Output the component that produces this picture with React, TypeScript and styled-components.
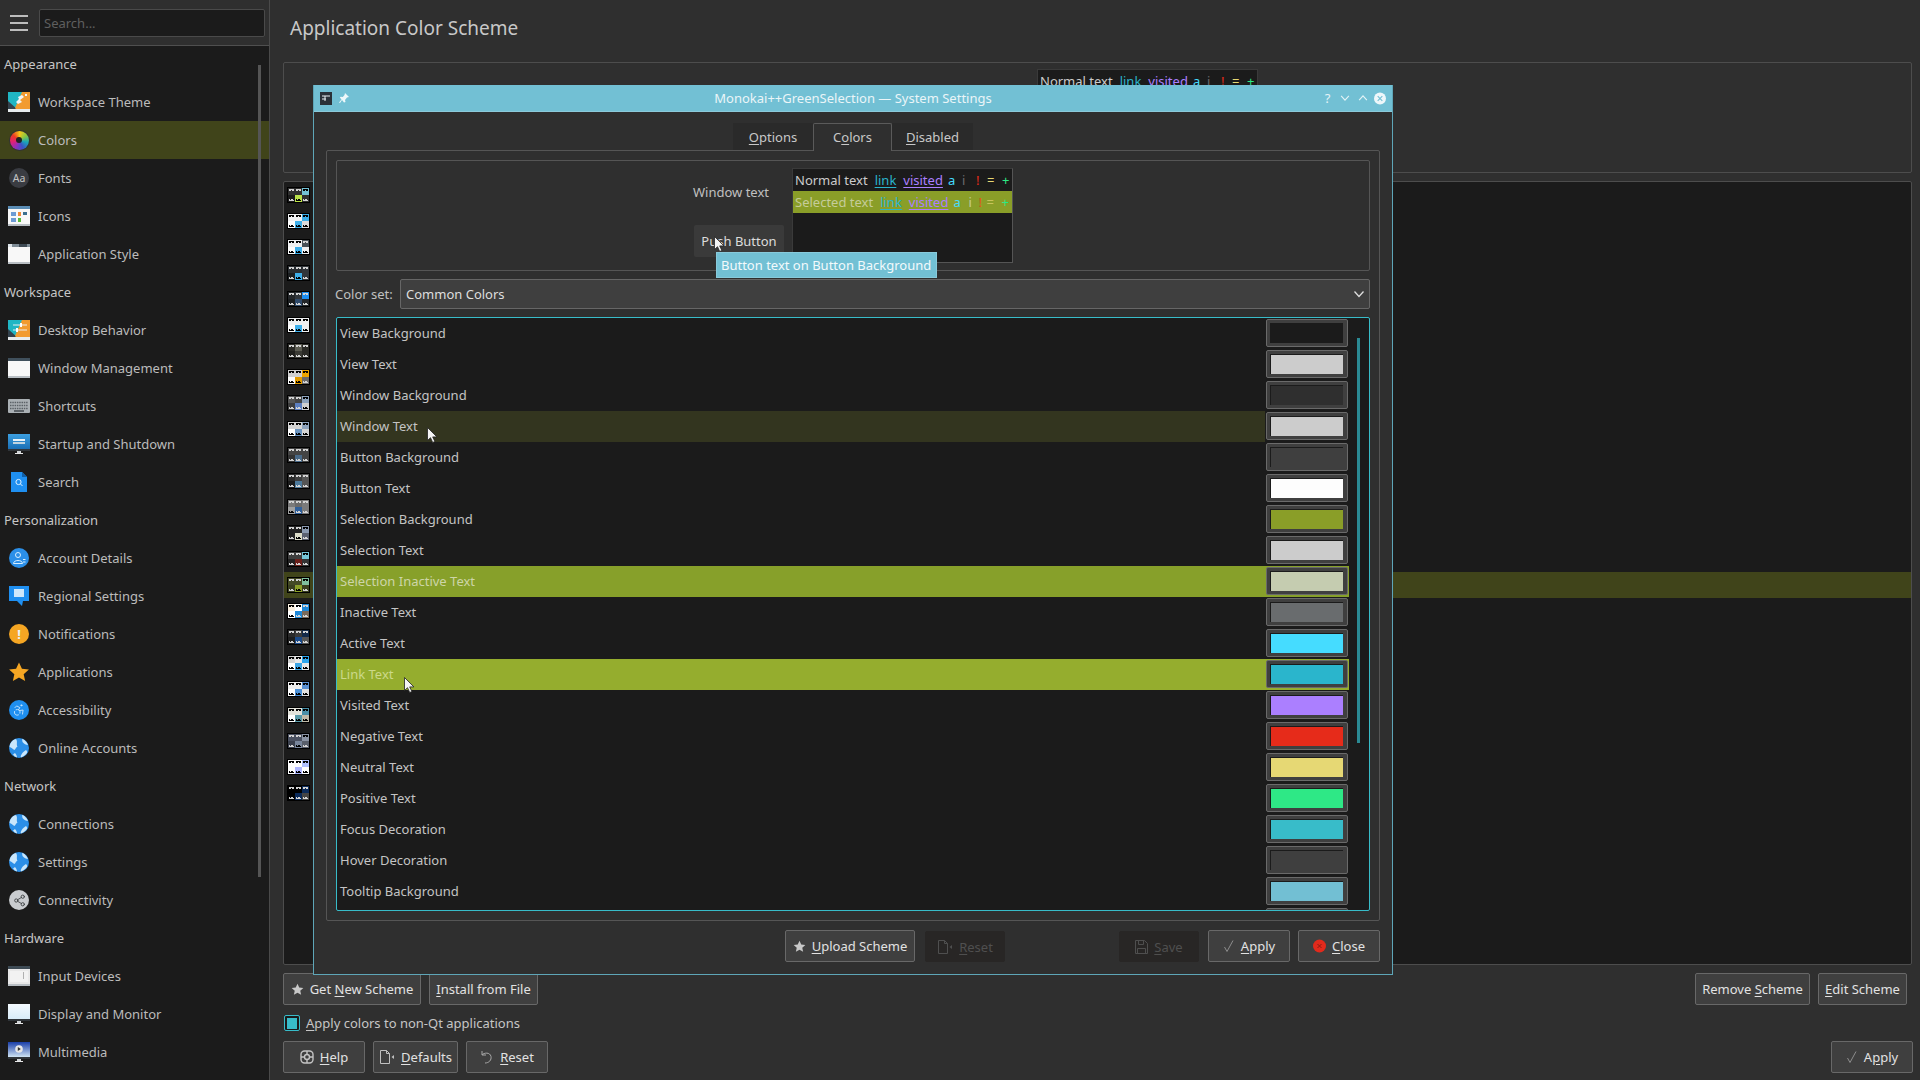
import React from "react";
import styled, { createGlobalStyle } from "styled-components";
import { Accessibility, Share2 } from "lucide-react";

const Global = createGlobalStyle`
  html, body { margin: 0; padding: 0; background: #2f2f2f; overflow: hidden; }
  body { font-family: "Noto Sans", "Open Sans", sans-serif; font-size: 13px; color: #cccccc; }
  * { box-sizing: border-box; }
`;

const Root = styled.div`
  position: relative; width: 1920px; height: 1080px; display: flex; overflow: hidden; background: #2f2f2f;
`;

/* ---------- sidebar ---------- */
const Sidebar = styled.aside`
  width: 270px; height: 1080px; flex: none; display: flex; flex-direction: column;
  border-right: 1px solid #4a4a4a; background: #1b1b1b;
`;
const SideHeader = styled.div`
  height: 46px; flex: none; display: flex; align-items: center; gap: 11px; padding: 0 4px 0 10px;
  background: #2f2f2f; border-bottom: 1px solid #4f4f4f;
`;
const Burger = styled.div`
  width: 18px; height: 16px; flex: none; display: flex; flex-direction: column; justify-content: space-between;
  & > i { display: block; height: 2px; background: #bdbdbd; }
`;
const SearchBox = styled.div`
  width: 226px; height: 28px; display: flex; align-items: center; padding-left: 4px; color: #5f5f5f;
  background: #1b1b1b; border: 1px solid #4a4a4a; border-radius: 2px;
`;
const SideList = styled.div`
  position: relative; flex: 1; overflow: hidden;
`;
const SideScroll = styled.div`
  position: absolute; left: 258px; top: 19px; width: 3px; height: 812px; background: #555;
`;
const SideHeading = styled.div`
  height: 38px; display: flex; align-items: center; padding: 0 0 1px 4px; color: #c6c6c6;
  &:first-child { height: 37px; padding-bottom: 2px; }
`;
const SideRow = styled.div<{ $active?: boolean }>`
  height: 38px; display: flex; align-items: center; gap: 8px; padding-left: 8px; color: #bcbcbc;
  background: ${(p) => (p.$active ? "#40441a" : "transparent")};
`;
const IconSlot = styled.span`
  width: 22px; height: 22px; flex: none; display: flex; align-items: center; justify-content: center;
  & > svg { display: block; }
`;
const ColorWheel = styled.span`
  width: 19px; height: 19px; border-radius: 50%; display: flex; align-items: center; justify-content: center;
  background: conic-gradient(#f5c518, #8cc63f, #19a7b8, #3a54c4, #8e2fc0, #e0207a, #ee3a24, #f5c518);
  box-shadow: 0 0 0 1px #333;
  &::after { content: ""; width: 6px; height: 6px; border-radius: 50%; background: #222; }
`;
const FontBadge = styled.span`
  width: 20px; height: 20px; border-radius: 50%; background: #3a3c42; color: #c4c4c4; font-size: 10.5px;
  display: flex; align-items: center; justify-content: center;
`;
const Round = styled.span<{ $bg: string }>`
  width: 20px; height: 20px; border-radius: 50%; background: ${(p) => p.$bg}; color: #e8f4fc;
  display: flex; align-items: center; justify-content: center; font-weight: 700; font-size: 13px;
`;

/* ---------- main page ---------- */
const Main = styled.main`
  flex: 1; min-width: 0; height: 1080px; display: flex; flex-direction: column; padding: 0 8px 7px 13px;
`;
const Title = styled.h1`
  margin: 0 0 6px; height: 56px; padding-left: 7px; line-height: 56px; font-size: 19px; font-weight: 400; color: #c8c8c8;
`;
const PreviewFrame = styled.div`
  height: 111px; flex: none; display: flex; justify-content: flex-start; padding: 6px 0 0 753px;
  border: 1px solid #4d4d4d; border-radius: 2px;
`;
const BackPreview = styled.div`
  width: 221px; height: 90px; background: #1b1b1b; border: 1px solid #3a3a3a;
`;
const SchemeList = styled.div`
  flex: 1; min-height: 0; margin-top: 8px; background: #1b1b1b; border: 1px solid #4d4d4d;
  border-radius: 2px; overflow: hidden;
`;
const SchemeRow = styled.div<{ $active?: boolean }>`
  height: 26px; display: flex; align-items: center; padding-left: 3px;
  background: ${(p) => (p.$active ? "#40441a" : "transparent")};
`;
const Thumb = styled.div`
  width: 23px; height: 16px; display: grid; grid-template-columns: repeat(3, 7px); grid-template-rows: repeat(2, 7px);
  border: 1px solid #000; background: #000;
`;
const markTop = (c: string) =>
  `linear-gradient(${c},${c}) 1px 1px/5px 1px no-repeat, linear-gradient(${c},${c}) 1px 2px/2px 1px no-repeat, linear-gradient(${c},${c}) 4px 2px/2px 1px no-repeat`;
const markBottom = (c: string) =>
  `linear-gradient(${c},${c}) 1px 5px/5px 1px no-repeat, linear-gradient(${c},${c}) 1px 4px/1px 1px no-repeat, linear-gradient(${c},${c}) 3px 4px/2px 1px no-repeat`;
const ThumbCell = styled.div<{ $bg: string; $mark: string; $bottom: boolean }>`
  background: ${(p) => (p.$bottom ? markBottom(p.$mark) : markTop(p.$mark))}, ${(p) => p.$bg};
`;
const ButtonRow = styled.div`
  flex: none; display: flex; align-items: center; gap: 8px;
`;
const FirstRow = styled(ButtonRow)`
  margin-top: 8px; padding-right: 5px;
`;
const LastRow = styled(ButtonRow)`
  margin-right: -1px;
`;
const Spacer = styled.div`
  flex: 1;
`;
const CheckRow = styled.label`
  height: 36px; flex: none; display: flex; align-items: center; gap: 6px; padding-left: 1px; color: #c6c6c6;
`;
const CheckBox = styled.span`
  width: 16px; height: 16px; display: flex; align-items: center; justify-content: center;
  border: 1px solid #38bcc9; border-radius: 2px; background: #1b1b1b;
  &::after { content: ""; width: 10px; height: 11px; background: #38bcc9; }
`;
const Btn = styled.button<{ $w: number }>`
  width: ${(p) => p.$w}px; height: 32px; flex: none; display: flex; align-items: center; justify-content: center; gap: 6px;
  padding: 0; font: inherit; color: #e2e2e2; background: #3f3f3f; border: 1px solid #686868; border-radius: 2px;
  & > svg { flex: none; display: block; }
`;
const DisabledBtn = styled(Btn)`
  height: 31px; margin: 1px 1px 0 2px; color: #4f4f4f; background: #282625; border-color: #282625;
`;
const Key = styled.u`
  text-underline-offset: 2px;
`;

/* ---------- dialog ---------- */
const Dialog = styled.section`
  position: absolute; left: 313px; top: 85px; width: 1080px; height: 890px; display: flex; flex-direction: column;
  background: #2f2f2f; border: 1px solid #5ea6b8; border-top: 0;
`;
const TitleBar = styled.header`
  height: 27px; flex: none; display: grid; grid-template-columns: 1fr auto 1fr; align-items: center; padding: 0 6px 0 6px;
  background: #72c0d4; color: #eaf5f8; border-bottom: 1px solid #8ccadb;
`;
const TitleLeft = styled.div`
  display: flex; align-items: center; gap: 7px;
`;
const TitleRight = styled.div`
  display: flex; align-items: center; justify-content: flex-end; gap: 5.5px;
  color: #e4f3f7; & > * { width: 12px; text-align: center; flex: none; }
`;
const Tabs = styled.nav`
  display: flex; justify-content: center; margin-top: 11px; height: 27px; flex: none;
`;
const Tab = styled.div<{ $active?: boolean; $w: number }>`
  width: ${(p) => p.$w}px; height: ${(p) => (p.$active ? "28px" : "27px")}; position: relative; z-index: 1;
  display: flex; align-items: center; justify-content: center; color: #c8c8c8;
  background: ${(p) => (p.$active ? "#2f2f2f" : "#2a2a2a")};
  ${(p) => (p.$active ? "border: 1px solid #5a5a5a; border-bottom: 0; border-radius: 2px 2px 0 0; padding-bottom: 1px;" : "")}
`;
const Pane = styled.div`
  flex: 1; min-height: 0; display: flex; flex-direction: column; margin: 0 12px; padding: 9px;
  border: 1px solid #555; border-radius: 2px;
`;
const DemoFrame = styled.div`
  height: 111px; flex: none; display: flex; gap: 8px; padding: 7px 0 0 356px; border: 1px solid #555; border-radius: 2px;
`;
const DemoColumn = styled.div`
  width: 91px; flex: none; padding-top: 14px; display: flex; flex-direction: column; gap: 21px;
`;
const DemoLabel = styled.div`
  height: 22px; line-height: 21px; color: #c0c0c0;
`;
const PushWrap = styled.div`
  position: relative; width: 90px; height: 32px; margin-left: 1px;
`;
const PushButton = styled.div`
  width: 90px; height: 32px; display: flex; align-items: center; justify-content: center; background: #3a3a3a; border-radius: 2px; color: #dcdcdc;
`;
const Tooltip = styled.div`
  position: absolute; left: 22px; top: 27px; width: 221px; height: 26px; display: flex; align-items: center; padding-left: 4px;
  background: #72c0d4; color: #f2fafc; border: 1px solid #88cadb; white-space: nowrap; z-index: 3;
`;
const CursorMark = styled.svg<{ $x: number; $y: number }>`
  position: absolute; left: ${(p) => p.$x}px; top: ${(p) => p.$y}px; z-index: 4; display: block;
`;
const TextDemo = styled.div`
  width: 221px; height: 95px; flex: none; background: #1b1b1b; border: 1px solid #3a3a3a; border-bottom-color: #555; border-right-color: #555;
`;
const DemoLine = styled.div<{ $selected?: boolean }>`
  height: 22px; display: flex; align-items: center; gap: 7px; padding-left: 2px; white-space: nowrap;
  background: ${(p) => (p.$selected ? "#8a9e28" : "transparent")};
  color: ${(p) => (p.$selected ? "#c5cc9a" : "#cccccc")};
`;
const Tone = styled.span<{ $c: string; $u?: boolean }>`
  color: ${(p) => p.$c}; ${(p) => (p.$u ? "text-decoration: underline; text-underline-offset: 2px;" : "")}
`;
const Symbols = styled.span`
  display: flex; flex: none; margin-left: -2px;
`;
const Sym = styled.span<{ $c: string; $w: number }>`
  width: ${(p) => p.$w}px; color: ${(p) => p.$c}; flex: none;
`;
const SetRow = styled.div`
  height: 30px; flex: none; margin: 8px 0 8px -1px; display: flex; align-items: center; color: #c0c0c0;
`;
const SetLabel = styled.span`
  width: 65px; flex: none;
`;
const Combo = styled.div`
  flex: 1; height: 30px; display: flex; align-items: center; justify-content: space-between; padding: 0 3px 0 5px;
  background: #3f3f3f; border: 1px solid #666; border-radius: 2px; color: #dedede;
`;
const ColorList = styled.div`
  position: relative; flex: 1; min-height: 0; overflow: hidden; background: #1b1b1b; border: 1px solid #38bcc9; border-radius: 2px; padding-right: 20px;
`;
const ColorScroll = styled.div`
  position: absolute; left: 1020px; top: 20px; width: 3px; height: 405px; background: #2b8a94;
`;
const ColorRow = styled.div<{ $tone: "plain" | "selected" | "pressed" }>`
  height: 31px; display: flex; align-items: flex-start;
  background: ${(p) => (p.$tone === "selected" ? "#87a02a" : p.$tone === "pressed" ? "#95ad2e" : "transparent")};
`;
const ColorName = styled.div<{ $hover?: boolean; $c: string }>`
  position: relative; flex: 1; height: 31px; display: flex; align-items: center; padding: 0 0 2px 3px; color: ${(p) => p.$c};
  background: ${(p) => (p.$hover ? "#33351f" : "transparent")};
`;
const SwatchBtn = styled.div`
  width: 82px; height: 28px; margin: 1px 1px 0; flex: none; padding: 3px 4px 3px 3px; display: flex;
  background: #3f3f3f; border: 1px solid #6a6a6a; border-radius: 2px;
`;
const SwatchFill = styled.div<{ $c: string }>`
  flex: 1; background: ${(p) => p.$c}; border-top: 1px solid #1b1b1b; border-left: 1px solid #1b1b1b;
`;
const DialogButtons = styled.div`
  height: 32px; flex: none; display: flex; align-items: center; gap: 8px; margin: 9px 0 12px; padding: 0 12px 0 471px;
`;

/* ---------- drawings ---------- */
const Cursor = ({ x, y }: { x: number; y: number }) => (
  <CursorMark $x={x} $y={y} width="11" height="16" viewBox="0 0 11 16">
    <path d="M.5.5v13l3-2.8 2.2 4.8 2.2-1-2.2-4.6h4.2z" fill="#f4f4f4" stroke="#222" strokeWidth=".8" />
  </CursorMark>
);
const Star = ({ c = "#c8c8c8", s = 13 }: { c?: string; s?: number }) => (
  <svg width={s} height={s} viewBox="0 0 24 24"><path fill={c} d="M12 1.5l3.2 7 7.6.8-5.7 5.1 1.6 7.5L12 18l-6.7 3.9 1.6-7.5L1.200 9.300l7.6-.8z" /></svg>
);
const DocBack = ({ c = "#c0c0c0" }: { c?: string }) => (
  <svg width="16" height="14" viewBox="0 0 16 14" fill="none"><path d="M1.500.5h6l3 3v10h-9z" stroke={c} /><path d="M7.500.5v3h3" stroke={c} /><path d="M15 5v4l-2.500-2z" fill={c} /></svg>
);
const Floppy = () => (
  <svg width="13" height="14" viewBox="0 0 13 14" fill="none" stroke="#4f4f4f"><path d="M.5.5h9l3 3v10H.500z" /><path d="M3.500.5v4h5v-4M2.500 13.500v-5h8v5" /></svg>
);
const Tick = () => (
  <svg width="12" height="14" viewBox="0 0 12 14" fill="none"><path d="M1.500 8l2.500 4.500L10 1.500" stroke="#8d8d8d" /></svg>
);
const CloseDot = () => (
  <svg width="13" height="14" viewBox="0 0 13 14"><circle cx="6.500" cy="7" r="6.500" fill="#e22a1c" /><path d="M4.500 5l4 4M8.500 5l-4 4" stroke="#8f1a10" /></svg>
);
const Undo = () => (
  <svg width="14" height="14" viewBox="0 0 14 14" fill="none" stroke="#a8a8a8"><path d="M2 1v4h4" /><path d="M2 5c2-2.500 8-3 9 1.500 .700 3.500-2 6.500-6 6.500" /></svg>
);
const HelpMark = () => (
  <svg width="14" height="14" viewBox="0 0 14 14" fill="none" stroke="#c4c4c4" strokeWidth="1.400">
    <rect x="1" y="1" width="12" height="12" rx="3.500" /><path d="M7 1v12M1 7h12" /><circle cx="7" cy="7" r="2.500" fill="#3f3f3f" />
  </svg>
);
const ChevDown = ({ c = "#dedede", s = 14 }: { c?: string; s?: number }) => (
  <svg width={s} height={s} viewBox="0 0 14 14" fill="none"><path d="M2.500 4.500L7 9.500l4.500-5" stroke={c} strokeWidth="1.300" /></svg>
);
const ChevUp = () => (
  <svg width="12" height="12" viewBox="0 0 14 14" fill="none"><path d="M2.500 9.500L7 4.500l4.500 5" stroke="#e4f3f7" strokeWidth="1.300" /></svg>
);
const AppGlyph = () => (
  <svg width="12" height="13" viewBox="0 0 12 13"><rect width="12" height="13" fill="#2a3138" /><path d="M2 4h8M2 7h4M5 4v5" stroke="#e8f0f2" /></svg>
);
const Pin = () => (
  <svg width="10" height="11" viewBox="0 0 10 11"><path d="M6 0l4 4-2 .5-2 2.500.5 2-1.500 .5L3 7 1 10 0 9.500 2.500 6.500.8 4.500l1-.8 2 .3L5.500 2z" fill="#eef8fa" /></svg>
);
const CloseRound = () => (
  <svg width="13" height="13" viewBox="0 0 13 13"><circle cx="6.500" cy="6.500" r="6.500" fill="#eef7fa" /><path d="M4 4l5 5M9 4l-5 5" stroke="#72c0d4" strokeWidth="1.200" /></svg>
);

const Win = ({ bar, body = "#f8f8f8", children }: { bar: string; body?: string; children?: React.ReactNode }) => (
  <svg width="22" height="20" viewBox="0 0 22 20">
    <rect y="0" width="22" height="20" fill={body} />
    <rect width="22" height="3" fill={bar} />
    <rect y="18" width="22" height="2" fill="#b9bfc4" />
    {children}
  </svg>
);
const Diag = ({ children }: { children?: React.ReactNode }) => (
  <svg width="22" height="20" viewBox="0 0 22 20">
    <rect width="22" height="17" fill="#20b6c4" />
    <path d="M0 9v8h9z" fill="#34424d" />
    <path d="M14 0h8v17H8l-1-1z" fill="#f29b30" />
    <rect y="17" width="22" height="3" fill="#e8ecee" />
    {children}
  </svg>
);
const Monitor = ({ top, bottom, children }: { top: string; bottom: string; children?: React.ReactNode }) => (
  <svg width="22" height="20" viewBox="0 0 22 20">
    <defs><linearGradient id={`m${top.slice(1)}`} x1="0" y1="0" x2="0" y2="1"><stop offset="0" stopColor={top} /><stop offset="1" stopColor={bottom} /></linearGradient></defs>
    <rect x="0" width="22" height="15" fill={`url(#m${top.slice(1)})`} />
    <rect x="0" y="15" width="22" height="2" fill="#30353a" />
    <rect x="9" y="17" width="4" height="2" fill="#cfd3d6" />
    <rect x="7" y="19" width="8" height="1" fill="#e8e8e8" />
    {children}
  </svg>
);
const Globe = () => (
  <svg width="20" height="20" viewBox="0 0 20 20">
    <circle cx="10" cy="10" r="10" fill="#2b8fe8" />
    <path d="M7 1C3 2 1 5 .5 9c2 .500 3 2 5 3 1-1 1.500-2.500 3-3.500C7 6.500 9 3.500 7 1zM13 1c2 0 5 3 6 6-2 0-4-1-5.500-3zM17 12c1 1 1.500 2 1 3-1.500 2-4 4-6 4.500-1-1.500 1-5 5-7.500zM6 15c1 1 2 3 2 4.500-1.500-.500-3-1.500-4-3z" fill="#c9e6fb" />
  </svg>
);

const iconFor = (n: string): React.ReactNode => {
  switch (n) {
    case "Workspace Theme": return <Diag><path d="M14 3l2 2-4 3 2 2-4 2-2-2 3-3-1-2zM17 2h2v2h-2z" fill="#f2f7f8" /></Diag>;
    case "Colors": return <ColorWheel />;
    case "Fonts": return <FontBadge>Aa</FontBadge>;
    case "Icons": return <Win bar="#5b8db5"><rect x="3" y="6" width="5" height="4" fill="#6c9bd4" /><rect x="10" y="6" width="3" height="4" fill="#f08a3c" /><rect x="15" y="6" width="4" height="3" fill="#3c6f8f" /><rect x="3" y="12" width="5" height="4" fill="#6c9bd4" /><rect x="10" y="12" width="3" height="4" fill="#58b93c" /></Win>;
    case "Application Style": return <Win bar="#7f8c96"><rect x="0" width="4" height="3" fill="#dce3e8" /><rect x="11" y="0" width="8" height="3" fill="#3e4a54" /></Win>;
    case "Desktop Behavior": return <Diag><path d="M5 5h14M5 10h14" stroke="#e9eef0" strokeWidth="1.200" /><rect x="12" y="3" width="2" height="4" fill="#fff" /><rect x="8" y="8" width="2" height="4" fill="#fff" /></Diag>;
    case "Window Management": return <Win bar="#40505c" />;
    case "Shortcuts": return (
      <svg width="22" height="14" viewBox="0 0 22 14"><rect width="22" height="14" rx="1" fill="#aab0b4" /><path d="M2 3.500h18M2 6.500h18M2 9.500h18" stroke="#5b6166" strokeWidth="1.400" strokeDasharray="1.500 .8" /><rect x="6" y="11" width="10" height="2" fill="#5b6166" /></svg>
    );
    case "Startup and Shutdown": return <Monitor top="#3c9fe0" bottom="#1a6fb5"><rect x="5" y="5" width="12" height="2" fill="#e8f2f8" /><rect x="5" y="8" width="12" height="2" fill="#c0d4e0" /></Monitor>;
    case "Search": return (
      <svg width="16" height="20" viewBox="0 0 16 20"><path d="M0 0h11l5 5v15H0z" fill="#1f8ff0" /><path d="M11 0l5 5h-5z" fill="#0f5fa8" /><circle cx="7.500" cy="10" r="2.600" fill="none" stroke="#dff1ff" /><path d="M9.500 12l2 2" stroke="#dff1ff" /></svg>
    );
    case "Account Details": return (
      <Round $bg="#2b8fe8"><svg width="14" height="14" viewBox="0 0 14 14" fill="none" stroke="#d8eeff"><circle cx="6" cy="4" r="2.500" /><path d="M1.500 12.500c0-4 9-4 9 0zM11 8.500h2.500M11 11h2.500" /></svg></Round>
    );
    case "Regional Settings": return (
      <svg width="20" height="20" viewBox="0 0 20 20"><path d="M0 0h20v15h-6l-1 5-5-5H0z" fill="#1f8ff0" /><rect x="5" y="3" width="10" height="8" fill="#cfe8fb" /></svg>
    );
    case "Notifications": return <Round $bg="#f5a623">!</Round>;
    case "Applications": return <Star c="#f5a623" s={22} />;
    case "Accessibility": return <Round $bg="#1f8ff0"><Accessibility size={14} strokeWidth={1.400} color="#d8eeff" /></Round>;
    case "Online Accounts":
    case "Connections":
    case "Settings": return <Globe />;
    case "Connectivity": return <Round $bg="#c9cccf"><Share2 size={13} strokeWidth={1.600} color="#3a3d40" /></Round>;
    case "Input Devices": return <Win bar="#3d4a54" body="#e8e8e8"><rect x="2" y="5" width="18" height="11" fill="#f2f2f2" /><rect x="15" y="6" width="1" height="7" fill="#b0b0b0" /></Win>;
    case "Display and Monitor": return <Monitor top="#f4fafe" bottom="#d8ecf8" />;
    case "Multimedia": return <Monitor top="#1a3ea8" bottom="#cfe4f4"><circle cx="11" cy="7" r="3.800" fill="#e8e8e8" /><path d="M9.800 5l3 2-3 2z" fill="#333" /></Monitor>;
    default: return null;
  }
};

/* ---------- data ---------- */
type SideEntry = { h?: string; n?: string };
const side: SideEntry[] = [
  { h: "Appearance" }, { n: "Workspace Theme" }, { n: "Colors" }, { n: "Fonts" }, { n: "Icons" }, { n: "Application Style" },
  { h: "Workspace" }, { n: "Desktop Behavior" }, { n: "Window Management" }, { n: "Shortcuts" }, { n: "Startup and Shutdown" }, { n: "Search" },
  { h: "Personalization" }, { n: "Account Details" }, { n: "Regional Settings" }, { n: "Notifications" }, { n: "Applications" }, { n: "Accessibility" }, { n: "Online Accounts" },
  { h: "Network" }, { n: "Connections" }, { n: "Settings" }, { n: "Connectivity" },
  { h: "Hardware" }, { n: "Input Devices" }, { n: "Display and Monitor" }, { n: "Multimedia" },
];

const schemes: string[][] = [
  ["#2f2f2f", "#2f2f2f", "#72c0d4", "#1b1b1b", "#b9e04a", "#2f2f2f"],
  ["#eff0f1", "#eff0f1", "#3daee9", "#fcfcfc", "#3daee9", "#dcdcdc"],
  ["#eff0f1", "#eff0f1", "#475057", "#fcfcfc", "#3daee9", "#eff0f1"],
  ["#2a2e32", "#2a2e32", "#31363b", "#1b1e20", "#3daee9", "#31363b"],
  ["#232629", "#31363b", "#1d8ef0", "#1b1e20", "#2f4a6a", "#232629"],
  ["#eff0f1", "#eff0f1", "#eff0f1", "#fcfcfc", "#3daee9", "#eff0f1"],
  ["#2a2a26", "#5c5c52", "#2a2a26", "#1f1f1c", "#3a3a34", "#2a2a26"],
  ["#d0d0d0", "#d0d0d0", "#eba400", "#fcfcfc", "#e39c00", "#6a6a6a"],
  ["#555555", "#444444", "#8da3bd", "#3d3d3d", "#5c7fc0", "#d0d0d0"],
  ["#d4d4d4", "#d4d4d4", "#8da3bd", "#ffffff", "#6a94c0", "#d4d4d4"],
  ["#444444", "#444444", "#444444", "#333333", "#4a6a88", "#444444"],
  ["#2b2b2b", "#3d3d3d", "#555555", "#1b1b1b", "#4d7a9c", "#555555"],
  ["#7a7a7a", "#6a6a6a", "#7a7a7a", "#a0a0a0", "#2f5f9a", "#7a7a7a"],
  ["#222222", "#222222", "#8a99b0", "#222222", "#dcdcc8", "#5a6070"],
  ["#3d3d3d", "#3d3d3d", "#74c4d6", "#222222", "#6a1f1a", "#333333"],
  ["#444a25", "#444a25", "#7fbf9f", "#3a4020", "#8a9e28", "#3a4020"],
  ["#faf0e0", "#ffffff", "#1e88d8", "#ffffff", "#1e88d8", "#7a6a5a"],
  ["#2a2a2a", "#3a3a3a", "#132a4a", "#1e1e1e", "#1a4a8a", "#555555"],
  ["#d4d4d4", "#e8e8e8", "#2ea6ee", "#ffffff", "#3da5e5", "#e8e8e8"],
  ["#eeeeee", "#eeeeee", "#5a90d0", "#ffffff", "#4a90d8", "#e0e0e0"],
  ["#e4e4dc", "#e4e4dc", "#4a90a8", "#ffffff", "#5a9aa8", "#c0baa8"],
  ["#4a5060", "#4a5060", "#8a93a3", "#3a3f4c", "#78859a", "#585e6a"],
  ["#ffffff", "#ffffff", "#b0c0ff", "#ffffff", "#b0b8ff", "#ffffff"],
  ["#000000", "#000000", "#0a2a5a", "#000000", "#0a2a5a", "#444444"],
];

const isLight = (hex: string) => {
  const v = parseInt(hex.slice(1), 16);
  return ((v >> 16) & 255) * 0.3 + ((v >> 8) & 255) * 0.59 + (v & 255) * 0.11 > 125;
};

type ColorEntry = { n: string; c: string; tone?: "selected" | "pressed"; hover?: boolean; text?: string };
const colors: ColorEntry[] = [
  { n: "View Background", c: "#1b1b1b" },
  { n: "View Text", c: "#cccccc" },
  { n: "Window Background", c: "#2f2f2f" },
  { n: "Window Text", c: "#cccccc", hover: true },
  { n: "Button Background", c: "#3f3f3f" },
  { n: "Button Text", c: "#fdfdfd" },
  { n: "Selection Background", c: "#8a9e28" },
  { n: "Selection Text", c: "#cccccc" },
  { n: "Selection Inactive Text", c: "#c5ccb0", tone: "selected", text: "#cdd5a8" },
  { n: "Inactive Text", c: "#696c6e" },
  { n: "Active Text", c: "#45dcff" },
  { n: "Link Text", c: "#2ab5cc", tone: "pressed", text: "#ccd98a" },
  { n: "Visited Text", c: "#ab7fff" },
  { n: "Negative Text", c: "#e62b1a" },
  { n: "Neutral Text", c: "#e6d874" },
  { n: "Positive Text", c: "#2ee886" },
  { n: "Focus Decoration", c: "#38bcc9" },
  { n: "Hover Decoration", c: "#3f3f3f" },
  { n: "Tooltip Background", c: "#72bfd3" },
  { n: "", c: "#fcfcfc" },
];

export default function App() {
  return (
    <Root>
      <Global />
      <Sidebar>
        <SideHeader>
          <Burger><i /><i /><i /></Burger>
          <SearchBox>Search...</SearchBox>
        </SideHeader>
        <SideList>
          {side.map((e) =>
            e.h ? (
              <SideHeading key={e.h}>{e.h}</SideHeading>
            ) : (
              <SideRow key={e.n} $active={e.n === "Colors"}>
                <IconSlot>{iconFor(e.n as string)}</IconSlot>
                <span>{e.n}</span>
              </SideRow>
            )
          )}
          <SideScroll />
        </SideList>
      </Sidebar>

      <Main>
        <Title>Application Color Scheme</Title>
        <PreviewFrame>
          <BackPreview>
            <DemoLine>
              <span>Normal text</span>
              <Tone $c="#2ab5cc" $u>link</Tone>
              <Tone $c="#ab7fff" $u>visited</Tone>
              <Symbols>
                <Sym $c="#45dcff" $w={14}>a</Sym>
                <Sym $c="#696c6e" $w={14}>i</Sym>
                <Sym $c="#e62b1a" $w={11}>!</Sym>
                <Sym $c="#e6d874" $w={15}>=</Sym>
                <Sym $c="#2ee886" $w={10}>+</Sym>
              </Symbols>
            </DemoLine>
          </BackPreview>
        </PreviewFrame>
        <SchemeList>
          {schemes.map((s, i) => (
            <SchemeRow key={i} $active={i === 15}>
              <Thumb>
                {s.map((c, j) => (
                  <ThumbCell key={j} $bg={c} $mark={isLight(c) ? "#000" : "#d4d4d4"} $bottom={j > 2} />
                ))}
              </Thumb>
            </SchemeRow>
          ))}
        </SchemeList>
        <FirstRow>
          <Btn $w={138}><Star /><span>Get <Key>N</Key>ew Scheme</span></Btn>
          <Btn $w={109}><span><Key>I</Key>nstall from File</span></Btn>
          <Spacer />
          <Btn $w={115}><span>Remove <Key>S</Key>cheme</span></Btn>
          <Btn $w={89}><span><Key>E</Key>dit Scheme</span></Btn>
        </FirstRow>
        <CheckRow>
          <CheckBox />
          <span><Key>A</Key>pply colors to non-Qt applications</span>
        </CheckRow>
        <LastRow>
          <Btn $w={82}><HelpMark /><span><Key>H</Key>elp</span></Btn>
          <Btn $w={85}><DocBack /><span><Key>D</Key>efaults</span></Btn>
          <Btn $w={82}><Undo /><span><Key>R</Key>eset</span></Btn>
          <Spacer />
          <Btn $w={82}><Tick /><span>A<Key>p</Key>ply</span></Btn>
        </LastRow>
      </Main>

      <Dialog>
        <TitleBar>
          <TitleLeft><AppGlyph /><Pin /></TitleLeft>
          <span>Monokai++GreenSelection — System Settings</span>
          <TitleRight>
            <span>?</span>
            <ChevDown c="#e4f3f7" s={12} />
            <ChevUp />
            <CloseRound />
          </TitleRight>
        </TitleBar>
        <Tabs>
          <Tab $w={80}><span><Key>O</Key>ptions</span></Tab>
          <Tab $w={79} $active><span>C<Key>o</Key>lors</span></Tab>
          <Tab $w={81}><span><Key>D</Key>isabled</span></Tab>
        </Tabs>
        <Pane>
          <DemoFrame>
            <DemoColumn>
              <DemoLabel>Window text</DemoLabel>
              <PushWrap>
                <PushButton>Push Button</PushButton>
                <Cursor x={20} y={11} />
                <Tooltip>Button text on Button Background</Tooltip>
              </PushWrap>
            </DemoColumn>
            <TextDemo>
              <DemoLine>
                <span>Normal text</span>
                <Tone $c="#2ab5cc" $u>link</Tone>
                <Tone $c="#ab7fff" $u>visited</Tone>
                <Symbols>
                  <Sym $c="#45dcff" $w={14}>a</Sym>
                  <Sym $c="#696c6e" $w={14}>i</Sym>
                  <Sym $c="#e62b1a" $w={11}>!</Sym>
                  <Sym $c="#e6d874" $w={15}>=</Sym>
                  <Sym $c="#2ee886" $w={10}>+</Sym>
                </Symbols>
              </DemoLine>
              <DemoLine $selected>
                <span>Selected text</span>
                <Tone $c="#2ab5cc" $u>link</Tone>
                <Tone $c="#ab7fff" $u>visited</Tone>
                <Symbols>
                  <Sym $c="#45dcff" $w={15}>a</Sym>
                  <Sym $c="#c5cc9a" $w={10}>i</Sym>
                  <Sym $c="#e0501a" $w={8}>!</Sym>
                  <Sym $c="#c7c45a" $w={15}>=</Sym>
                  <Sym $c="#2ee886" $w={10}>+</Sym>
                </Symbols>
              </DemoLine>
            </TextDemo>
          </DemoFrame>
          <SetRow>
            <SetLabel>Color set:</SetLabel>
            <Combo><span>Common Colors</span><ChevDown /></Combo>
          </SetRow>
          <ColorList>
            {colors.map((c, i) => (
              <ColorRow key={i} $tone={c.tone ?? "plain"}>
                <ColorName $hover={c.hover} $c={c.text ?? "#c4c4c4"}>
                  {c.n}
                  {c.hover && <Cursor x={90} y={16} />}
                  {c.tone === "pressed" && <Cursor x={67} y={18} />}
                </ColorName>
                <SwatchBtn><SwatchFill $c={c.c} /></SwatchBtn>
              </ColorRow>
            ))}
            <ColorScroll />
          </ColorList>
        </Pane>
        <DialogButtons>
          <Btn $w={130}><Star /><span><Key>U</Key>pload Scheme</span></Btn>
          <DisabledBtn $w={80}><DocBack c="#4f4f4f" /><span><Key>R</Key>eset</span></DisabledBtn>
          <Spacer />
          <DisabledBtn $w={80}><Floppy /><span><Key>S</Key>ave</span></DisabledBtn>
          <Btn $w={82}><Tick /><span><Key>A</Key>pply</span></Btn>
          <Btn $w={82}><CloseDot /><span><Key>C</Key>lose</span></Btn>
        </DialogButtons>
      </Dialog>
    </Root>
  );
}
